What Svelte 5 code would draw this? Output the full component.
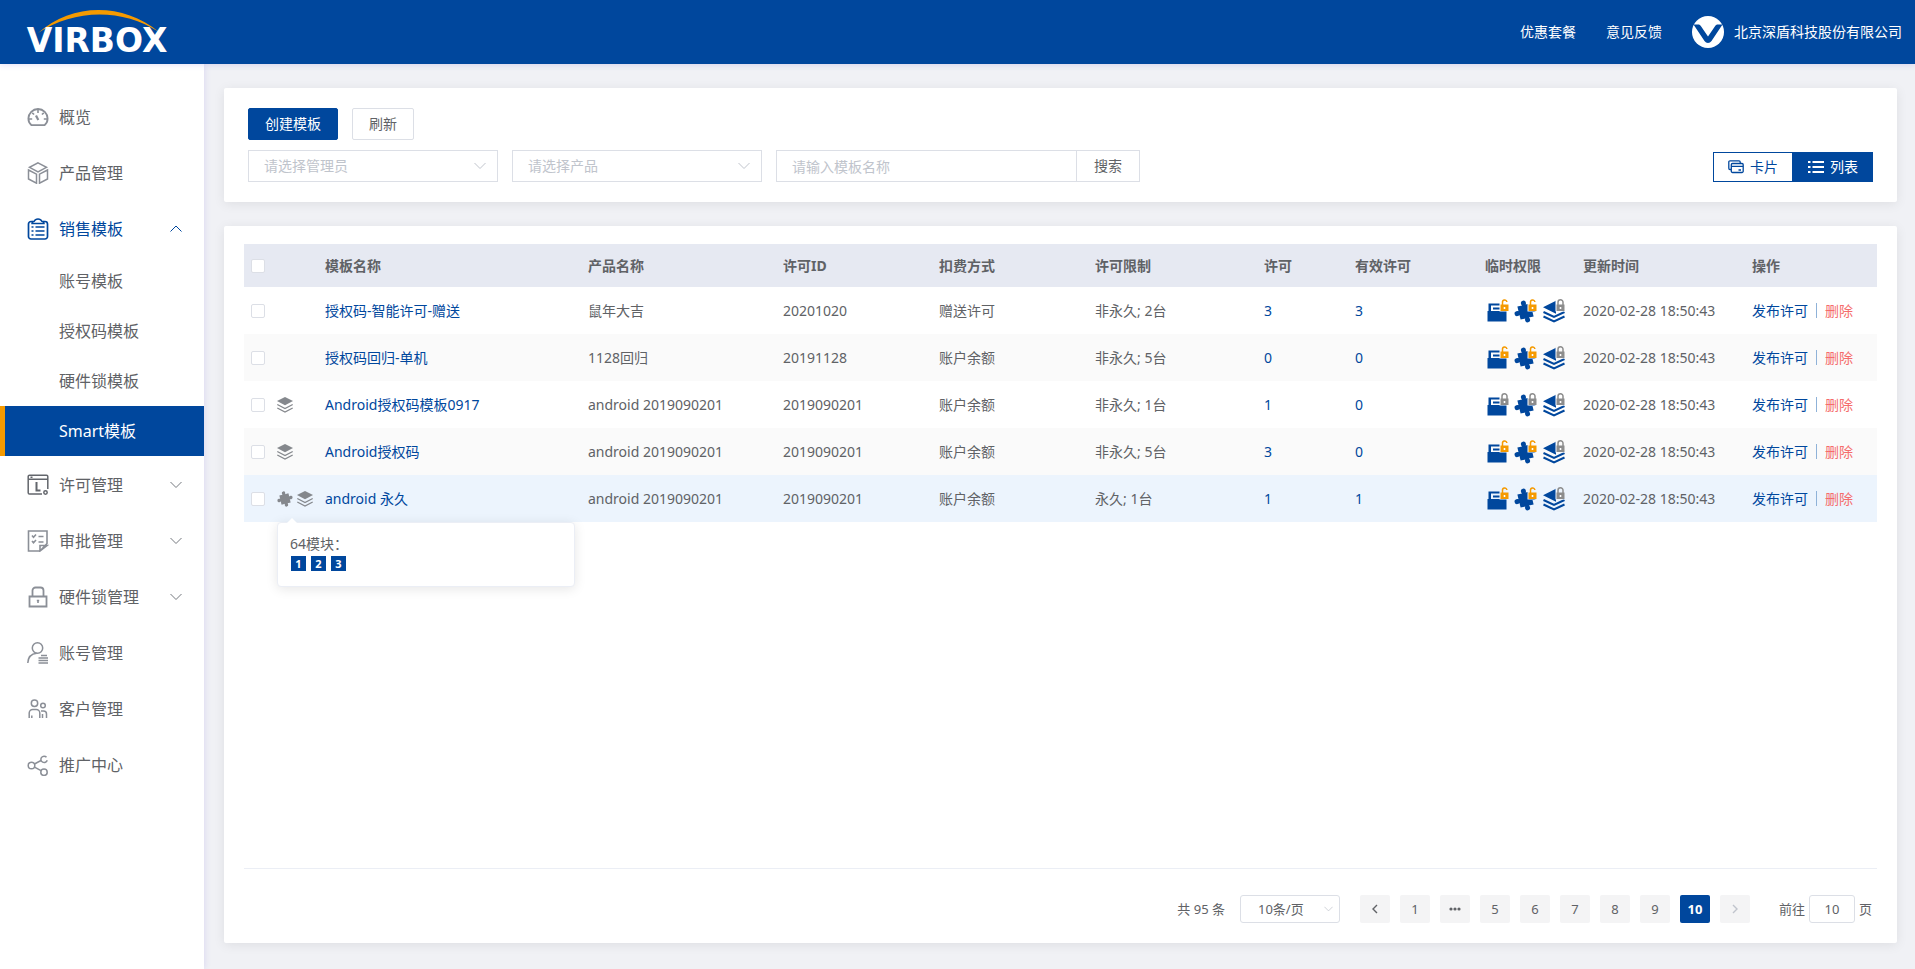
<script>
  const subItems = ['账号模板', '授权码模板', '硬件锁模板', 'Smart模板'];
  const topMenu = [
    { icon: 'gauge', label: '概览' },
    { icon: 'cube', label: '产品管理' }
  ];
  const bottomMenu = [
    { icon: 'license', label: '许可管理', expandable: true },
    { icon: 'review', label: '审批管理', expandable: true },
    { icon: 'lock', label: '硬件锁管理', expandable: true },
    { icon: 'account', label: '账号管理' },
    { icon: 'people', label: '客户管理' },
    { icon: 'share', label: '推广中心' }
  ];

  const time = '2020-02-28 18:50:43';
  const rows = [
    { icons: [], name: '授权码-智能许可-赠送', product: '鼠年大吉', id: '20201020', mode: '赠送许可', limit: '非永久; 2台', total: 3, valid: 3, open: true },
    { icons: [], name: '授权码回归-单机', product: '1128回归', id: '20191128', mode: '账户余额', limit: '非永久; 5台', total: 0, valid: 0, open: true },
    { icons: ['layers'], name: 'Android授权码模板0917', product: 'android 2019090201', id: '2019090201', mode: '账户余额', limit: '非永久; 1台', total: 1, valid: 0, open: false },
    { icons: ['layers'], name: 'Android授权码', product: 'android 2019090201', id: '2019090201', mode: '账户余额', limit: '非永久; 5台', total: 3, valid: 0, open: true },
    { icons: ['puzzle', 'layers'], name: 'android 永久', product: 'android 2019090201', id: '2019090201', mode: '账户余额', limit: '永久; 1台', total: 1, valid: 1, open: true, modules: [1, 2, 3] }
  ];
  const pages = [5, 6, 7, 8, 9, 10];
  let current = $state(10);
</script>

{#snippet menuIcon(name)}
  <svg class="menu-icon" viewBox="0 0 22 22" width="22" height="22" aria-hidden="true">
    {#if name === 'gauge'}
      <path stroke-width="1.8" d="M4.5 19.2C2.4 17.6 1.4 15.2 1.4 12.6a9.6 9.6 0 0 1 19.2 0c0 2.6-1 5-3.1 6.6z" />
      <path stroke-width="1.6" d="M11 3.5v3.5M5.2 6.8l1.9 1.7M16.800 6.800l-1.900 1.700M2 13h3.200M16.800 13H20" />
      <path stroke-width="2.2" d="M9 9.500l2.300 4.500" />
    {:else if name === 'cube'}
      <path d="M11 .8l8.500 4.500L11 10 2.500 5.300zM1.500 8l8 4.200v9L1.500 17zM20.500 8l-8 4.200v9l8-4.200z" />
    {:else if name === 'clipboard'}
      <path stroke-width="1.7" d="M6 3.500H4a2.500 2.500 0 0 0-2.500 2.500v12.500A2.500 2.500 0 0 0 4 21h14a2.500 2.500 0 0 0 2.500-2.500V6A2.500 2.500 0 0 0 18 3.500h-2" />
      <path d="M5 5.500c0-1.200 1-2 2.200-2.200C8 1.500 9 1 11 1s3 .5 3.800 2.300C16 3.500 17 4.300 17 5.500z" />
      <path d="M4.500 9h2M8.500 9H17.500M4.500 13h2M8.500 13h9M4.500 17h2M8.500 17h9" />
    {:else if name === 'license'}
      <path stroke="#63666c" d="M15 20H2.500A1.300 1.300 0 0 1 1.200 18.700V2.500a1.300 1.300 0 0 1 1.300-1.300h17a1.300 1.300 0 0 1 1.300 1.300V15M1.200 5.200h19.600M3.500 3.200h2" />
      <path stroke="#63666c" stroke-width="2" d="M9.500 8v8.500h4" />
      <circle stroke="#63666c" cx="18.500" cy="18.500" r="1.700" />
    {:else if name === 'review'}
      <path stroke-width="1.6" d="M20 13.500V1H1.500v20H13zM13 21v-5.500h7zM5 5.500l1.500 1.700L9 4.500M5 11l1.500 1.700L9 10M11.500 6.500h5M11.500 12h5" />
    {:else if name === 'lock'}
      <path stroke-width="1.8" d="M2.500 10.500h17V20.500h-17zM5.500 10.500V4.500A3 3 0 0 1 8.500 1.500h5a3 3 0 0 1 3 3v6" />
      <path stroke-width="1.6" d="M11 14v3M9.800 14.500h2.400" />
    {:else if name === 'account'}
      <circle cx="10.500" cy="6" r="5.200" />
      <path d="M.8 21c.2-5.500 3.500-9.300 9-9.800M14 13.500h6M11.500 16h9.500M11.500 18.500h9.500M11.500 21h9.500" />
    {:else if name === 'people'}
      <circle cx="7.500" cy="5.300" r="3.200" />
      <circle cx="16" cy="7.500" r="2.300" />
      <path d="M2.200 20v-5a3.500 3.500 0 0 1 3.500-3.500h3.600a3.500 3.500 0 0 1 3.500 3.500v5M14 13h2.500a3 3 0 0 1 3 3v4M15.500 16v4M4.800 17.500V20" />
    {:else if name === 'share'}
      <circle cx="4.500" cy="11.500" r="3.300" />
      <circle cx="17" cy="18.200" r="3.200" />
      <path d="M19.500 3.200A3.200 3.200 0 1 0 20.200 6.200M7.500 10l6.500-3.500M7.500 13.200l6.500 3.500" />
    {/if}
  </svg>
{/snippet}

{#snippet chevron(up)}
  <svg class="chevron" viewBox="0 0 12 8" width="12" height="8" aria-hidden="true">
    <path d={up ? 'M.5 6.500L6 1l5.500 5.500' : 'M.5 1L6 6.500 11.500 1'} />
  </svg>
{/snippet}

{#snippet puzzleShape()}
  <g transform="rotate(-14 11.500 12.500)">
    <path d="M5.500 6.500h4V4h4v2.500h4v4H20v4h-2.500v4h-4V21h-4v-2.500h-4v-4H3v-4h2.500z" />
    <path d="M4.800 5.800h5v5h-5zM13.200 5.800h5v5h-5zM4.800 14.200h5v5h-5zM13.200 14.200h5v5h-5z" />
    <circle cx="11.500" cy="3.800" r="2.500" />
    <circle cx="11.500" cy="21.200" r="2.500" />
    <circle cx="2.800" cy="12.500" r="2.500" />
    <circle cx="20.200" cy="12.500" r="2.500" />
  </g>
{/snippet}

{#snippet permIcon(name, open)}
  <svg class="perm" viewBox="0 0 24 24" width="24" height="24" role="img" aria-label={name}>
    {#if name === 'folder'}
      <path d="M1.500 12h19v10.500h-19z" />
      <path d="M2.500 12V4.500h11.500V6.500H5V12zM7 8.500h8v2H7z" />
    {:else if name === 'puzzle'}
      {@render puzzleShape()}
    {:else}
      <path d="M1 8.200L14 1.800v13z" />
      <path class="line" d="M1.500 13l10.500 5 10.500-5M1.500 17.500l10.500 5 10.500-5" />
    {/if}
    <g class={open ? 'badge open' : 'badge'}>
      <path class="halo" d="M13.500 2h9.500v10.500h-9.500z" />
      <path class="case" d="M14.500 5.500h8V12h-8z" />
      <path class="shackle" d={open ? 'M16.500 6V3.500a2.200 2.200 0 0 1 4.400-.5' : 'M16 6V3.300a2.500 2.500 0 0 1 5 0V6'} />
      <path class="hole" d="M17.700 8h1.600v2h-1.600z" />
    </g>
  </svg>
{/snippet}

<div class="app">
  <header>
    <svg class="logo" viewBox="0 0 172 64" width="172" height="64" role="img" aria-label="VIRBOX">
      <path fill="#f59a00" d="M38 33C72 3 122 2 159 32C122 8 74 9 38 33z" />
      <text x="97" y="52" text-anchor="middle">VIRBOX</text>
    </svg>
    <nav class="top-links">
      <a href="#deal">优惠套餐</a>
      <a href="#feedback">意见反馈</a>
      <a class="company" href="#company">
        <svg viewBox="0 0 32 32" width="32" height="32" aria-hidden="true">
          <circle cx="16" cy="16" r="16" fill="#fff" />
          <path fill="#00479d" d="M1.500 8.500h4.500c1.500 0 2.300.6 3 1.700L16 20.500l7-10.300c.7-1.100 1.500-1.700 3-1.700h4.500L19.500 25c-1.800 2.600-5.200 2.600-7 0z" />
        </svg>
        <span>北京深盾科技股份有限公司</span>
      </a>
    </nav>
  </header>

  <div class="body">
    <aside>
      {#each topMenu as item}
        <a class="item" href="#{item.icon}">{@render menuIcon(item.icon)}<span>{item.label}</span></a>
      {/each}
      <button class="item active-parent" type="button" aria-expanded="true">
        {@render menuIcon('clipboard')}<span>销售模板</span>{@render chevron(true)}
      </button>
      <div class="sub">
        {#each subItems as label, i}
          <a href="#sub{i}" class:selected={i === 3}>{label}</a>
        {/each}
      </div>
      {#each bottomMenu as item}
        {#if item.expandable}
          <button class="item" type="button" aria-expanded="false">
            {@render menuIcon(item.icon)}<span>{item.label}</span>{@render chevron(false)}
          </button>
        {:else}
          <a class="item" href="#{item.icon}">{@render menuIcon(item.icon)}<span>{item.label}</span></a>
        {/if}
      {/each}
    </aside>

    <main>
      <section class="card filters">
        <div class="row actions">
          <button class="btn primary" type="button">创建模板</button>
          <button class="btn" type="button">刷新</button>
        </div>
        <div class="row fields">
          <div class="select">
            <select aria-label="管理员"><option>请选择管理员</option></select>
            {@render chevron(false)}
          </div>
          <div class="select">
            <select aria-label="产品"><option>请选择产品</option></select>
            {@render chevron(false)}
          </div>
          <div class="search">
            <input type="text" placeholder="请输入模板名称" aria-label="模板名称" />
            <button type="button">搜索</button>
          </div>
          <div class="toggle">
            <button type="button">
              <svg viewBox="0 0 16 14" width="16" height="14" aria-hidden="true">
                <path d="M3.500 9.500H2A1.300 1.300 0 0 1 .8 8.200V2A1.200 1.200 0 0 1 2 .8h9A1.200 1.200 0 0 1 12.200 2v.8M4.500 3.500h9.500a1.200 1.200 0 0 1 1.200 1.200v6.600a1.200 1.200 0 0 1-1.200 1.200H4.500a1.200 1.200 0 0 1-1.200-1.200V4.700a1.200 1.200 0 0 1 1.200-1.200zM3.500 6.300h11.500M10.500 10h2.500" />
              </svg>
              卡片
            </button>
            <button type="button" class="on">
              <svg viewBox="0 0 16 14" width="16" height="14" aria-hidden="true">
                <path stroke-width="2" d="M0 2h2.500M4.500 2H16M0 7h2.500M4.500 7H16M0 12h2.500M4.500 12H16" />
              </svg>
              列表
            </button>
          </div>
        </div>
      </section>

      <section class="card list">
        <table>
          <colgroup>
            <col style="width: 33px" /><col style="width: 48px" /><col style="width: 263px" /><col style="width: 195px" />
            <col style="width: 156px" /><col style="width: 156px" /><col style="width: 169px" /><col style="width: 91px" />
            <col style="width: 130px" /><col style="width: 98px" /><col style="width: 169px" /><col style="width: 125px" />
          </colgroup>
          <thead>
            <tr>
              <th class="check"><input type="checkbox" aria-label="全选" /></th>
              <th></th>
              <th>模板名称</th><th>产品名称</th><th>许可ID</th><th>扣费方式</th><th>许可限制</th>
              <th>许可</th><th>有效许可</th><th>临时权限</th><th>更新时间</th><th>操作</th>
            </tr>
          </thead>
          <tbody>
            {#each rows as r}
              <tr class:hovered={r.modules}>
                <td class="check"><input type="checkbox" aria-label={r.name} /></td>
                <td class="flags">
                  <div class="flag-row">
                    {#each r.icons as f}
                      {#if f === 'puzzle'}
                        <svg viewBox="0 1 23 23" width="16" height="16" aria-hidden="true">{@render puzzleShape()}</svg>
                      {:else}
                        <svg viewBox="0 0 16 16" width="16" height="16" aria-hidden="true">
                          <path d="M8 0l8 4-8 4.200L0 4z" />
                          <path class="line" d="M.3 7.500L8 11.500l7.700-4M.3 11L8 15l7.700-4" />
                        </svg>
                      {/if}
                    {/each}
                  </div>
                  {#if r.modules}
                    <div class="popover" role="tooltip">
                      <div>64模块：</div>
                      <div class="modules">{#each r.modules as m}<span>{m}</span>{/each}</div>
                    </div>
                  {/if}
                </td>
                <td><a href="#name">{r.name}</a></td>
                <td>{r.product}</td>
                <td>{r.id}</td>
                <td>{r.mode}</td>
                <td>{r.limit}</td>
                <td><a href="#total">{r.total}</a></td>
                <td><a href="#valid">{r.valid}</a></td>
                <td>
                  <div class="perms">
                    {@render permIcon('folder', r.open)}
                    {@render permIcon('puzzle', r.open)}
                    {@render permIcon('layers', false)}
                  </div>
                </td>
                <td>{time}</td>
                <td>
                  <div class="ops"><a href="#publish">发布许可</a><i></i><a class="danger" href="#delete">删除</a></div>
                </td>
              </tr>
            {/each}
          </tbody>
        </table>

        <footer>
          <span class="total">共 95 条</span>
          <div class="select size">
            <select aria-label="每页条数"><option>10条/页</option></select>
            {@render chevron(false)}
          </div>
          <div class="pager">
            <button type="button" aria-label="上一页">
              <svg viewBox="0 0 8 10" width="8" height="10" aria-hidden="true"><path d="M6 1L2 5l4 4" /></svg>
            </button>
            <button type="button">1</button>
            <button type="button" aria-label="更多">
              <svg viewBox="0 0 12 4" width="12" height="4" aria-hidden="true">
                <circle cx="2" cy="2" r="1.600" /><circle cx="6" cy="2" r="1.600" /><circle cx="10" cy="2" r="1.600" />
              </svg>
            </button>
            {#each pages as p}
              <button type="button" class:current={p === current} onclick={() => (current = p)}>{p}</button>
            {/each}
            <button type="button" aria-label="下一页" disabled>
              <svg viewBox="0 0 8 10" width="8" height="10" aria-hidden="true"><path d="M2 1l4 4-4 4" /></svg>
            </button>
          </div>
          <label class="jump">前往<input type="text" value="10" />页</label>
        </footer>
      </section>
    </main>
  </div>
</div>

<style>
  :global(body) {
    margin: 0;
    background: #f0f1f5;
  }
  .app, .app * {
    box-sizing: border-box;
  }
  .app {
    min-height: 100vh;
    display: flex;
    flex-direction: column;
    font-family: "Noto Sans", "Noto Sans CJK SC", sans-serif;
    font-size: 14px;
    line-height: 20px;
    color: #606266;
  }
  a {
    color: #00479d;
    text-decoration: none;
  }
  button, input, select {
    font: inherit;
    color: inherit;
    margin: 0;
    outline: none;
  }
  button {
    cursor: pointer;
  }
  header {
    height: 64px;
    background: #00479d;
    display: flex;
    justify-content: space-between;
    align-items: center;
    padding-right: 13px;
    position: relative;
    z-index: 2;
    box-shadow: 0 1px 6px rgba(80, 60, 220, 0.16);
  }
  .logo text {
    font: bold 33px "DejaVu Sans", sans-serif;
    fill: #fff;
  }
  .top-links {
    display: flex;
    align-items: center;
    gap: 30px;
  }
  .top-links a {
    color: #fff;
  }
  .company {
    display: flex;
    align-items: center;
    gap: 10px;
  }
  .body {
    flex: 1;
    display: flex;
  }
  aside {
    width: 204px;
    flex: none;
    background: #fff;
    padding-top: 24px;
    position: relative;
    z-index: 1;
    box-shadow: 1px 0 6px rgba(80, 60, 220, 0.12);
  }
  .item {
    width: 100%;
    height: 56px;
    border: 0;
    background: none;
    padding: 2px 22px 0 27px;
    display: flex;
    align-items: center;
    gap: 10px;
    font-size: 16px;
    color: #606266;
  }
  .item .chevron {
    margin-left: auto;
    stroke: #75787e;
  }
  .menu-icon {
    fill: none;
    stroke: #8b8f97;
    stroke-width: 1.5;
  }
  .active-parent, .active-parent .menu-icon, .active-parent .chevron {
    color: #00479d;
    stroke: #00479d;
  }
  .active-parent span {
    stroke: none;
  }
  .chevron {
    fill: none;
    stroke: #c0c4cc;
    flex: none;
  }
  .sub a {
    display: block;
    height: 50px;
    line-height: 50px;
    font-size: 16px;
    padding-left: 54px;
    border-left: 5px solid transparent;
    color: #606266;
  }
  .sub a.selected {
    background: #00479d;
    background-clip: padding-box;
    border-left-color: #f59a00;
    color: #fff;
  }
  main {
    flex: 1;
    min-width: 0;
    display: flex;
    flex-direction: column;
    gap: 24px;
    padding: 24px 18px 26px 20px;
  }
  .card {
    background: #fff;
    border-radius: 2px;
    box-shadow: 0 2px 12px rgba(0, 0, 0, 0.08);
  }
  .filters {
    padding: 20px 24px;
    display: flex;
    flex-direction: column;
    gap: 10px;
  }
  .row {
    display: flex;
    gap: 14px;
  }
  .btn {
    height: 32px;
    padding: 0 16px;
    border: 1px solid #dcdfe6;
    border-radius: 2px;
    background: #fff;
  }
  .btn.primary {
    background: #00479d;
    border-color: #00479d;
    color: #fff;
  }
  .select {
    display: grid;
    align-items: center;
    width: 250px;
  }
  .select select {
    grid-area: 1 / 1;
    width: 100%;
    height: 32px;
    padding: 0 36px 0 15px;
    appearance: none;
    border: 1px solid #dcdfe6;
    border-radius: 0;
    background: #fff;
    color: #c0c4cc;
  }
  .select .chevron {
    grid-area: 1 / 1;
    justify-self: end;
    margin-right: 12px;
    pointer-events: none;
  }
  .search {
    display: flex;
    width: 364px;
  }
  .search input {
    flex: 1;
    min-width: 0;
    height: 32px;
    padding: 0 15px;
    border: 1px solid #dcdfe6;
    border-right: 0;
  }
  .search input::placeholder {
    color: #c0c4cc;
  }
  .search button {
    width: 64px;
    padding: 0;
    border: 1px solid #dcdfe6;
    background: #fff;
  }
  .toggle {
    margin-left: auto;
    display: flex;
    height: 30px;
    align-self: flex-end;
  }
  .toggle button {
    width: 80px;
    padding: 0;
    display: flex;
    align-items: center;
    justify-content: center;
    gap: 6px;
    border: 1px solid #00479d;
    background: #fff;
    color: #00479d;
  }
  .toggle .on {
    background: #00479d;
    color: #fff;
  }
  .toggle svg {
    fill: none;
    stroke: currentColor;
    stroke-width: 1.3;
  }
  .list {
    flex: 1;
    display: flex;
    flex-direction: column;
    padding: 18px 20px 20px;
  }
  table {
    width: 100%;
    table-layout: fixed;
    border-collapse: collapse;
  }
  th, td {
    padding: 0;
    text-align: left;
    white-space: nowrap;
  }
  th {
    height: 43px;
    background: #e6e9f2;
    font-weight: bold;
  }
  td {
    height: 47px;
  }
  tbody tr:nth-child(even) {
    background: #fafafa;
  }
  tbody tr.hovered {
    background: #ecf4fd;
  }
  .check {
    padding-left: 7px;
  }
  input[type='checkbox'] {
    appearance: none;
    display: block;
    width: 14px;
    height: 14px;
    border: 1px solid #dcdfe6;
    border-radius: 2px;
    background: #fff;
  }
  .flags {
    position: relative;
  }
  .flag-row {
    display: flex;
    gap: 4px;
    fill: #85888d;
  }
  .line {
    fill: none;
    stroke: #85888d;
    stroke-width: 1.3;
  }
  .popover {
    position: absolute;
    z-index: 3;
    top: 47px;
    left: 0;
    width: 298px;
    height: 65px;
    padding: 11px 12px;
    background: #fff;
    border: 1px solid #ebeef5;
    border-radius: 4px;
    box-shadow: 0 2px 12px rgba(0, 0, 0, 0.1);
  }
  .popover::before {
    content: '';
    position: absolute;
    top: -5px;
    left: 9px;
    border: 5px solid transparent;
    border-top: 0;
    border-bottom-color: #fff;
  }
  .modules {
    display: flex;
    gap: 5px;
    padding: 2px 1px;
  }
  .modules span {
    width: 15px;
    height: 15px;
    background: #00479d;
    color: #fff;
    font-size: 11px;
    font-weight: bold;
    line-height: 15px;
    text-align: center;
  }
  .perms {
    display: flex;
    gap: 4px;
    padding-left: 1px;
  }
  .perm {
    fill: #00479d;
    flex: none;
  }
  .perm .line {
    stroke: #00479d;
    stroke-width: 2;
  }
  .badge {
    color: #8c8c8c;
  }
  .badge.open {
    color: #f59a00;
  }
  .badge .halo, .badge .hole {
    fill: #fff;
  }
  tr:nth-child(even) .badge .halo {
    fill: #fafafa;
  }
  tr.hovered .badge .halo {
    fill: #ecf4fd;
  }
  .badge .case {
    fill: currentColor;
  }
  .badge .shackle {
    fill: none;
    stroke: currentColor;
    stroke-width: 1.5;
  }
  .ops {
    display: flex;
    align-items: center;
    gap: 8px;
  }
  .ops i {
    width: 1px;
    height: 15px;
    background: #8fb2d8;
  }
  .danger {
    color: #f56c6c;
  }
  footer {
    margin-top: auto;
    border-top: 1px solid #ebeef5;
    padding: 26px 5px 0 0;
    display: flex;
    justify-content: flex-end;
    align-items: center;
    font-size: 13px;
  }
  .total {
    margin-right: 15px;
  }
  .select.size {
    width: 100px;
    margin-right: 20px;
  }
  .size select {
    height: 28px;
    border-radius: 3px;
    padding: 0 18px 0 17px;
    color: #606266;
  }
  .size .chevron {
    width: 9px;
    margin-right: 7px;
  }
  .pager {
    display: flex;
    gap: 10px;
    margin-right: 29px;
  }
  .pager button {
    width: 30px;
    height: 28px;
    padding: 0;
    border: 0;
    border-radius: 2px;
    background: #f4f4f5;
    display: flex;
    align-items: center;
    justify-content: center;
  }
  .pager .current {
    background: #00479d;
    color: #fff;
    font-weight: bold;
  }
  .pager button:disabled {
    color: #c0c4cc;
  }
  .pager path {
    fill: none;
    stroke: currentColor;
    stroke-width: 1.4;
  }
  .pager circle {
    fill: currentColor;
  }
  .jump {
    display: flex;
    align-items: center;
    gap: 4px;
  }
  .jump input {
    width: 46px;
    height: 28px;
    padding: 0;
    border: 1px solid #dcdfe6;
    border-radius: 3px;
    text-align: center;
  }
</style>
